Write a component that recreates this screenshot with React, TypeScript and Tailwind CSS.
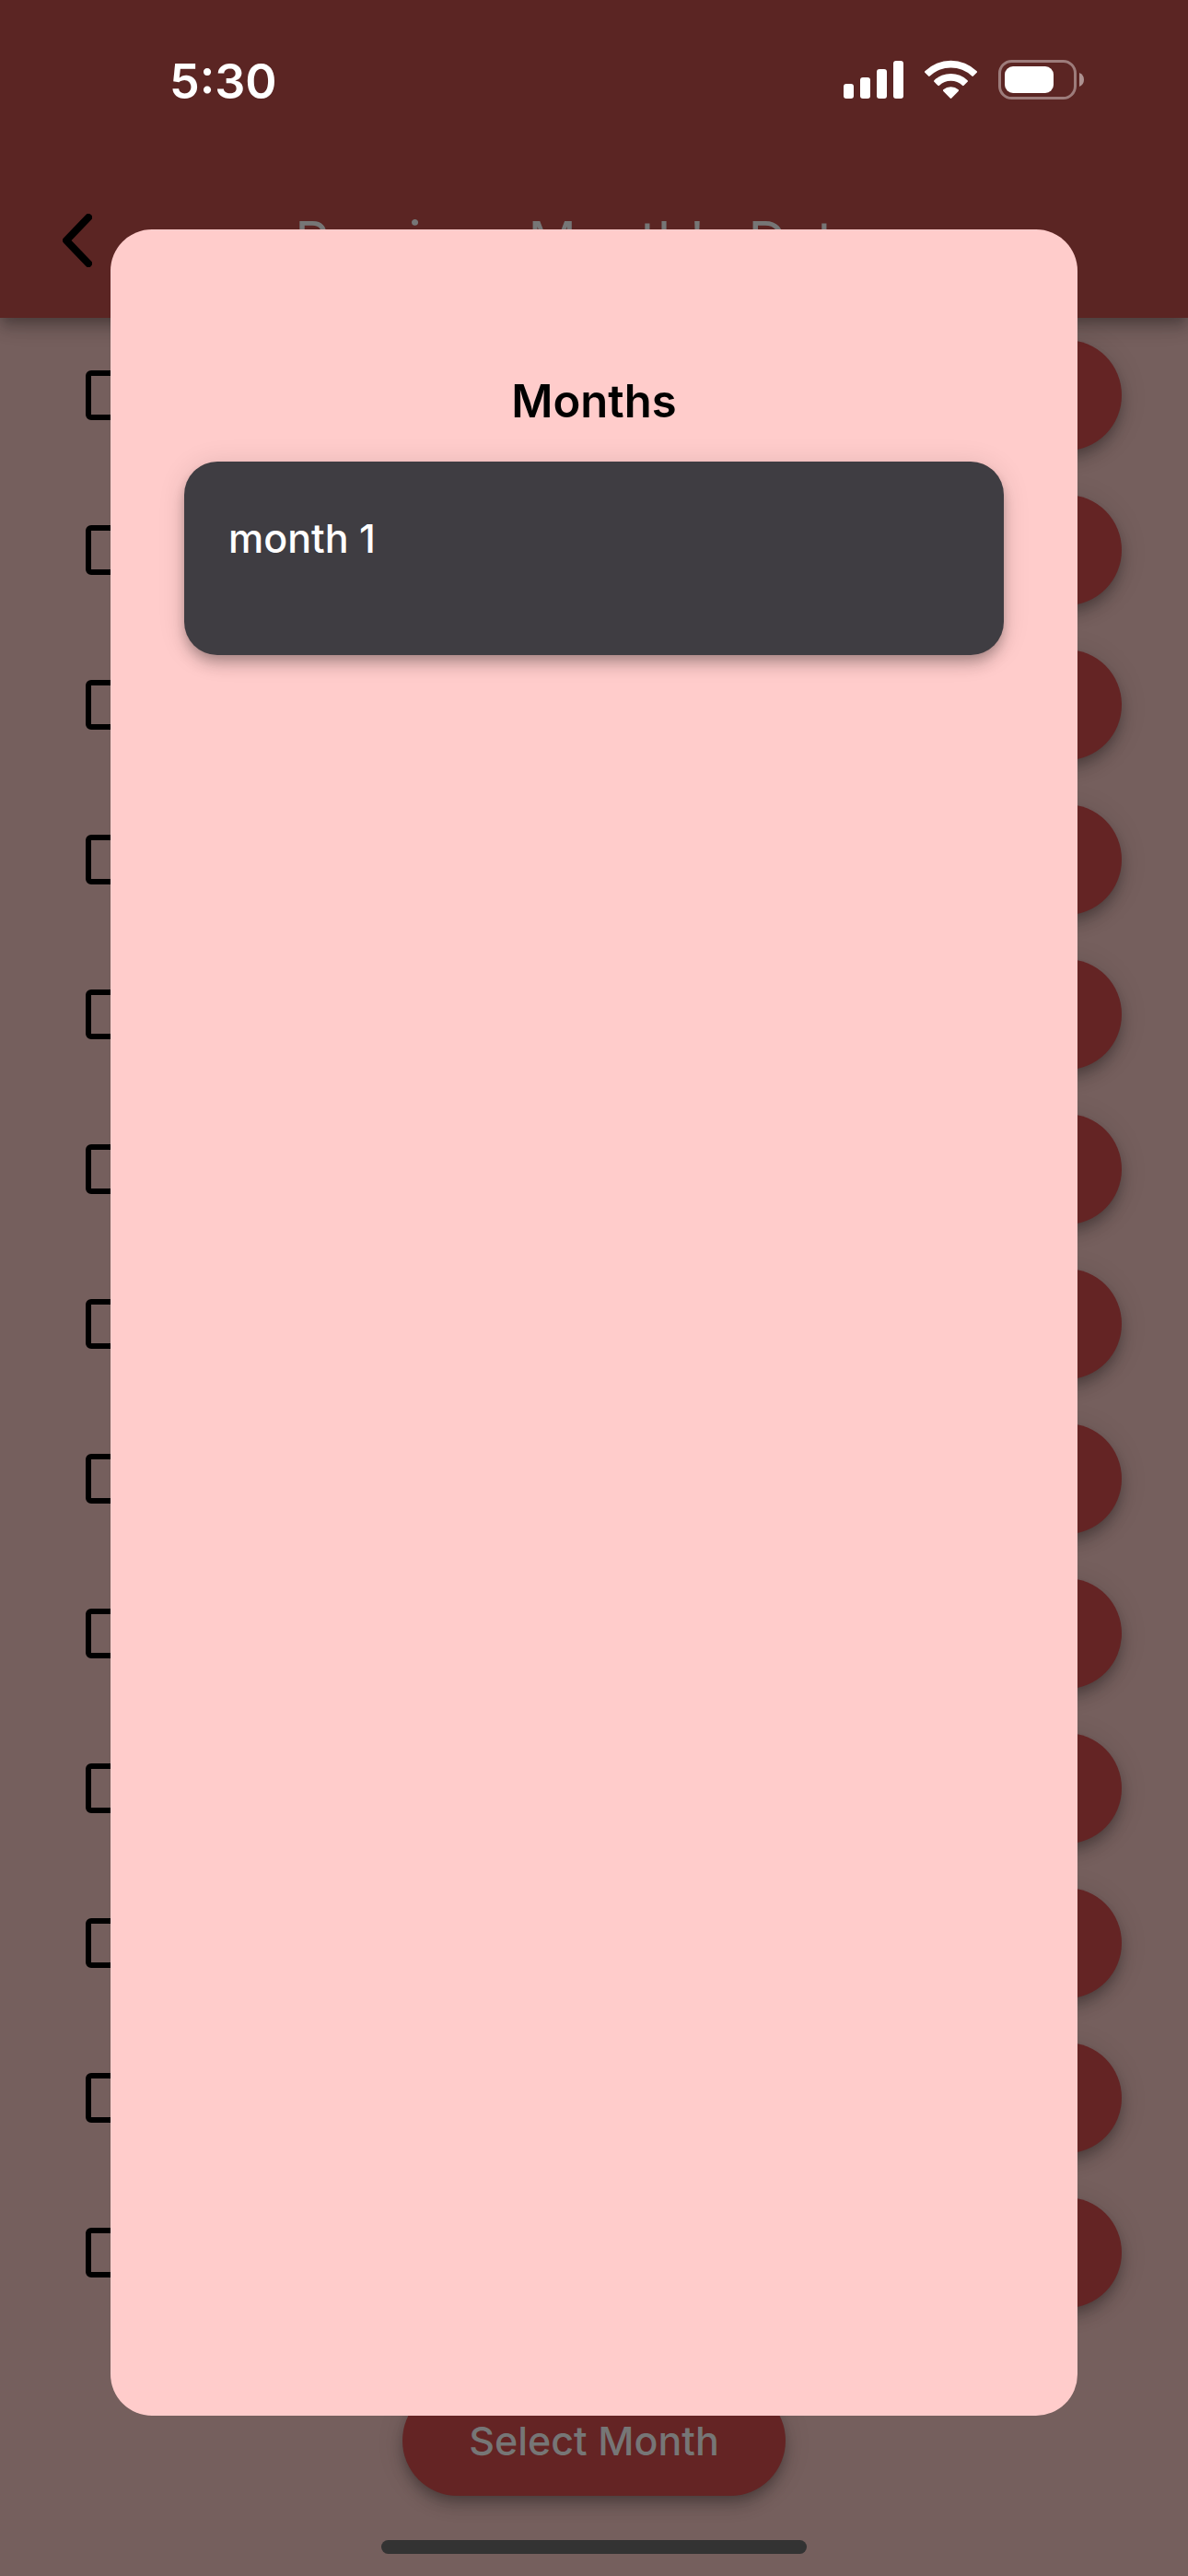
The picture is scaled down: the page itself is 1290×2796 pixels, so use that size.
const MONTHS = ["month 1"];
const ROWS = Array.from({ length: 13 }, (_, i) => i + 1);

const SHADOW =
  "shadow-[0_6px_12px_-3px_rgba(0,0,0,0.2),0_12px_15px_0_rgba(0,0,0,0.14),0_3px_30px_0_rgba(0,0,0,0.12)]";

function StatusBar() {
  return (
    <div className="flex h-[177px] items-start justify-between pt-[57px] pr-[113px] pl-[184px]">
      <span className="text-[52px] leading-[64px] font-semibold text-white">5:30</span>
      <svg width="261" height="43" viewBox="0 0 261 43" fill="#fff" className="mt-2" aria-hidden="true">
        <rect x="0" y="26" width="11" height="16" rx="3" />
        <rect x="18" y="19" width="11" height="23" rx="3" />
        <rect x="36" y="10" width="11" height="32" rx="3" />
        <rect x="54" y="1" width="11" height="41" rx="3" />
        <path d="M88.3 12.2a40.2 40.2 0 0 1 56.4 0q.7.8 0 1.6l-3.8 3.8q-.8.7-1.6 0a33 33 0 0 0-45.6 0q-.8.7-1.6 0l-3.8-3.8q-.7-.8 0-1.6z" />
        <path d="M98.4 22.2a26.3 26.3 0 0 1 36.2 0q.8.8 0 1.6l-4 4q-.8.8-1.6 0a18.3 18.3 0 0 0-25 0q-.8.8-1.6 0l-4-4q-.8-.8 0-1.6z" />
        <path d="M108.3 32.3a12.6 12.6 0 0 1 16.4 0q.8.8 0 1.6l-7.4 7.6q-.8.8-1.6 0l-7.4-7.6q-.8-.8 0-1.6z" />
        <rect x="169.500" y="1.500" width="82" height="40" rx="13" fill="none" stroke="#9d7c7b" strokeWidth="3" />
        <rect x="175" y="7" width="53" height="29" rx="9" />
        <path d="M256 14q5 2 5 7.500t-5 7.500z" fill="#ad9291" />
      </svg>
    </div>
  );
}

function Header() {
  return (
    <header className={`relative bg-[#5b2523] ${SHADOW}`}>
      <StatusBar />
      <div className="grid h-[168px] grid-cols-[168px_1fr_168px] items-center">
        <button type="button" aria-label="Back" className="flex h-full items-center justify-center">
          <svg width="32" height="58" viewBox="0 0 32 58" fill="none" stroke="#000" strokeWidth="8" strokeLinecap="round" strokeLinejoin="round" aria-hidden="true">
            <path d="M28 4 4 29l24 25" />
          </svg>
        </button>
        <h1 className="text-center text-[58px] leading-[72px] whitespace-nowrap text-[#767676]">Previous Month's Dates</h1>
      </div>
    </header>
  );
}

function MonthsDialog() {
  return (
    <div className="absolute inset-0 flex px-[120px] pt-[249px] pb-[174px]">
      <section role="dialog" aria-modal="true" aria-labelledby="months-title" className="flex-1 rounded-[45px] bg-[#ffcccb] px-20 pt-[157px]">
        <h2 id="months-title" className="text-center text-[49px] leading-[60px] font-semibold text-black">
          Months
        </h2>
        <ul className="mt-[35px] space-y-6">
          {MONTHS.map((month) => (
            <li key={month}>
              <button
                type="button"
                className={`flex h-[210px] w-full items-start rounded-[36px] bg-[#3f3d42] px-12 pt-14 text-left text-[43px] leading-[54px] font-medium text-white ${SHADOW}`}
              >
                {month}
              </button>
            </li>
          ))}
        </ul>
      </section>
    </div>
  );
}

export default function App() {
  return (
    <div className="relative min-h-screen bg-[#755f5d] font-['Inter',sans-serif]">
      <Header />
      <main className="flex flex-col items-center">
        <ul className="w-full pr-[72px] pl-[93px]">
          {ROWS.map((row) => (
            <li key={row} className="flex h-[168px] items-center justify-between">
              <input
                type="checkbox"
                aria-label={`Row ${row}`}
                className="size-[54px] appearance-none rounded-[6px] border-[6px] border-black"
              />
              <button type="button" aria-label={`Open row ${row}`} className={`h-[120px] w-[240px] rounded-full bg-[#642424] ${SHADOW}`} />
            </li>
          ))}
        </ul>
        <button
          type="button"
          className={`mt-[60px] h-[120px] rounded-full bg-[#642424] px-[72px] text-[43px] leading-[54px] font-medium text-[#767676] ${SHADOW}`}
        >
          Select Month
        </button>
        <div className="mt-12 mb-6 h-[15px] w-[462px] rounded-full bg-[#333]" />
      </main>
      <MonthsDialog />
    </div>
  );
}
